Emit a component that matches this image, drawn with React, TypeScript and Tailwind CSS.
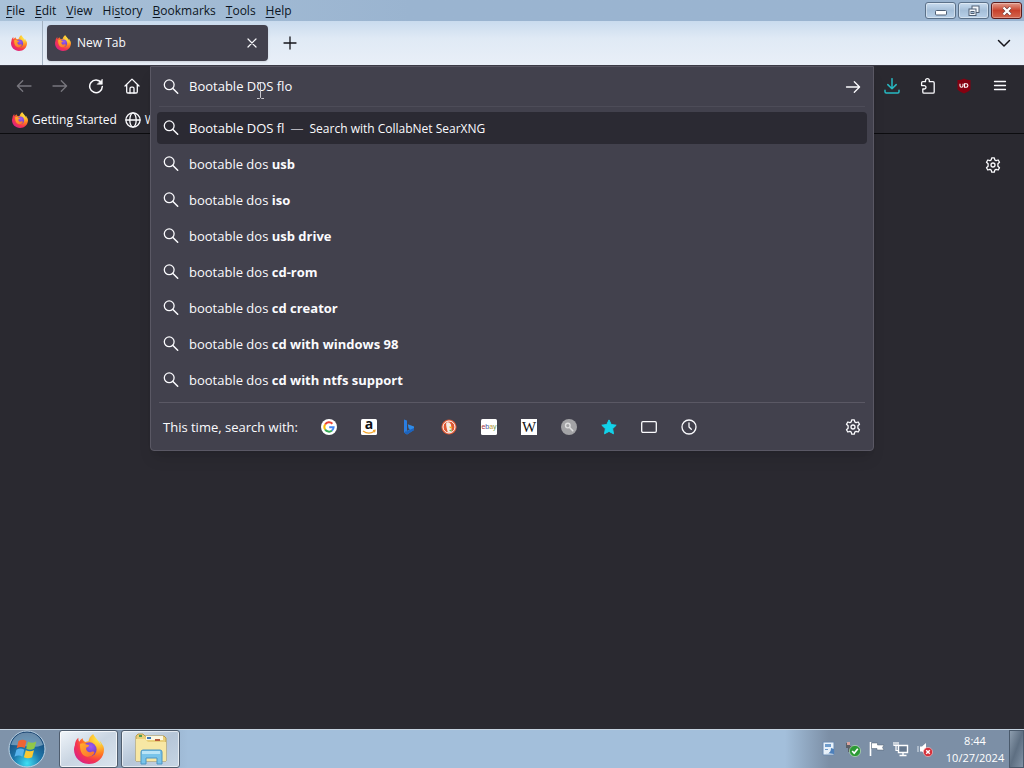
import { useState, type ReactNode } from 'react';

function FirefoxLogo({ className }: { className: string }) {
  return (
    <svg viewBox="0 0 32 32" className={className} aria-hidden="true">
      <defs>
        <radialGradient id="ffBody" cx="0.82" cy="0.15" r="1">
          <stop offset="0" stopColor="#fff04a" />
          <stop offset="0.28" stopColor="#ffbd2f" />
          <stop offset="0.52" stopColor="#ff7a22" />
          <stop offset="0.75" stopColor="#f5364e" />
          <stop offset="1" stopColor="#d9208a" />
        </radialGradient>
        <radialGradient id="ffGlobe" cx="0.6" cy="0.3" r="0.8">
          <stop offset="0" stopColor="#a05af0" />
          <stop offset="1" stopColor="#5a35b8" />
        </radialGradient>
        <linearGradient id="ffTail" x1="0" y1="0" x2="1" y2="1">
          <stop offset="0" stopColor="#ffb02e" />
          <stop offset="1" stopColor="#ff6a2b" />
        </linearGradient>
      </defs>
      <path
        fill="url(#ffBody)"
        d="M30.3 11.5c-.7-1.700-2-3.500-3.100-4.100.9 1.700 1.300 3.300 1.500 4.500C26.900 7.400 23.800 5.600 21.300 1.600 20.900 1 20.600.5 20.500 0c-3.500 2-4.700 5.700-5 7.600-1.100.1-2.200.4-3.200.8-1.200-.6-3.300-1.800-3-4-1.700.9-3 2.400-3.600 3.900-.8-.6-1.200-2.600-1-4.200C2.600 5.400 1 8.900.9 12.200.2 13.500 0 15.500 0 16.700 0 25 7 32 16 32s16-6.700 16-15.500c0-1.700-.5-3.600-1.700-5z"
      />
      <circle cx="16.500" cy="16.500" r="7.600" fill="url(#ffGlobe)" />
      <path
        fill="url(#ffTail)"
        d="M6.500 10.500c2.200-.9 4.500-.7 6 .4 1.500.2 3 .5 3.700 1.100-.1 1.200-1.500 1.900-3 2.500-.5.900-.1 2-.1 2.400 1 2.200 3 3 5.200 2.200 2-.8 3.500-.2 3.500.9-1.300 3.300-4.600 4.800-7.800 4.300C9 23.500 6 19.500 6.500 10.500z"
      />
    </svg>
  );
}

function Line({ className = 'size-4', children }: { className?: string; children: ReactNode }) {
  return (
    <svg
      viewBox="0 0 16 16"
      className={className}
      fill="none"
      stroke="currentColor"
      strokeWidth="1.3"
      strokeLinecap="round"
      strokeLinejoin="round"
      aria-hidden="true"
    >
      {children}
    </svg>
  );
}

const SearchIcon = () => (
  <Line className="size-4 shrink-0">
    <circle cx="6.200" cy="5.800" r="4.900" />
    <path d="M9.900 9.500l4.800 4.800" strokeWidth="1.500" />
  </Line>
);

const GearIcon = () => (
  <Line>
    <path d="M6.700.8h2.600l.5 2.100 1.300.8 2.100-.7 1.300 2.300-1.600 1.500v2.400l1.600 1.500-1.300 2.300-2.100-.7-1.300.8-.5 2.100H6.700l-.5-2.100-1.300-.8-2.100.7-1.300-2.300 1.600-1.500V6.800L1.500 5.300 2.800 3l2.100.7 1.300-.8z" />
    <circle cx="8" cy="8" r="2" />
  </Line>
);

const GlobeIcon = () => (
  <Line>
    <circle cx="8" cy="8" r="7.100" />
    <ellipse cx="8" cy="8" rx="3.200" ry="7.100" />
    <path d="M1 8h14" />
  </Line>
);

const menus = [
  ['', 'F', 'ile'],
  ['', 'E', 'dit'],
  ['', 'V', 'iew'],
  ['Hi', 's', 'tory'],
  ['', 'B', 'ookmarks'],
  ['', 'T', 'ools'],
  ['', 'H', 'elp'],
];

const suggestions = ['usb', 'iso', 'usb drive', 'cd-rom', 'cd creator', 'cd with windows 98', 'cd with ntfs support'];

const engines: { name: string; icon: ReactNode }[] = [
  {
    name: 'Google',
    icon: (
      <svg viewBox="0 0 16 16" className="size-4">
        <circle cx="8" cy="8" r="8" fill="#fff" />
        <g fill="none" strokeWidth="2">
          <path d="M4.100 5.500A4.600 4.600 0 0 1 11.400 4.800" stroke="#ea4335" />
          <path d="M4.100 5.500a4.600 4.600 0 0 0 0 5" stroke="#fbbc05" />
          <path d="M4.100 10.500a4.600 4.600 0 0 0 6.900 1" stroke="#34a853" />
          <path d="M11 11.500A4.600 4.600 0 0 0 12.600 8.200H8.200" stroke="#4285f4" />
        </g>
      </svg>
    ),
  },
  {
    name: 'Amazon',
    icon: (
      <svg viewBox="0 0 16 16" className="size-4 overflow-visible">
        <rect width="16" height="16" rx="1.500" fill="#fff" />
        <text x="8" y="10" textAnchor="middle" fontSize="14" fontWeight="700" fontFamily="Open Sans, sans-serif" fill="#111">a</text>
        <path d="M2 12c3.500 2.600 8 2.600 11.500.3M12 11.500l2-.2-.5 2" fill="none" stroke="#f3a52c" strokeWidth="1.200" />
      </svg>
    ),
  },
  {
    name: 'Bing',
    icon: (
      <svg viewBox="0 0 16 16" className="size-4">
        <path d="M3 .5l3 1v10.200L3 13.500z" fill="#2a7de0" />
        <path d="M6.800 5.300l6.200 2.300v3.200L6 15.500l-3-2 6-3.200-1.400-.8z" fill="#2f8be8" />
        <path d="M3 13.500l3 2 7-4.200V9z" fill="#1d63bd" />
      </svg>
    ),
  },
  {
    name: 'DuckDuckGo',
    icon: (
      <svg viewBox="0 0 16 16" className="size-4">
        <circle cx="8" cy="8" r="7.600" fill="#de5833" />
        <circle cx="8" cy="8" r="6" fill="none" stroke="#fff" strokeWidth="1" />
        <path d="M5.200 3.700c2.800-1.300 5.200.6 5 3.900l.6 5.200c-1.500 1-3 .9-4 .4C6.100 10 4.800 7.200 5.200 3.700z" fill="#f6eee6" />
        <path d="M8.200 7.600l3.400.5-2.500 1.300z" fill="#fdb80a" />
        <path d="M8.500 11l2.100-.4v2l-2.100-.6z" fill="#5eb648" />
      </svg>
    ),
  },
  {
    name: 'eBay',
    icon: (
      <svg viewBox="0 0 16 16" className="size-4">
        <rect width="16" height="16" rx="1.500" fill="#fff" />
        <text x="8" y="10" textAnchor="middle" fontSize="7" fontFamily="Liberation Sans, sans-serif">
          <tspan fill="#a83238">e</tspan>
          <tspan fill="#3c54a0">b</tspan>
          <tspan fill="#c29a35">a</tspan>
          <tspan fill="#6b9440">y</tspan>
        </text>
      </svg>
    ),
  },
  {
    name: 'Wikipedia',
    icon: (
      <svg viewBox="0 0 16 16" className="size-4">
        <rect width="16" height="16" fill="#fff" />
        <text x="8" y="13" textAnchor="middle" fontSize="15" fontFamily="Liberation Serif, serif" fill="#111">W</text>
      </svg>
    ),
  },
  {
    name: 'CollabNet SearXNG',
    icon: (
      <svg viewBox="0 0 16 16" className="size-4">
        <circle cx="8" cy="8" r="8" fill="#a3a3a6" />
        <circle cx="6.800" cy="6.600" r="2.300" fill="none" stroke="#dededf" strokeWidth="1.400" />
        <path d="M8.600 8.500l3.200 3.300" stroke="#dededf" strokeWidth="1.600" strokeLinecap="round" />
      </svg>
    ),
  },
  {
    name: 'Bookmarks',
    icon: (
      <svg viewBox="0 0 16 16" className="size-4">
        <path
          d="M8 .9l2.200 4.600 5 .7-3.600 3.500.9 5.100L8 12.400l-4.500 2.400.9-5.100L.8 6.200l5-.7z"
          fill="#12d3ea"
          stroke="#12d3ea"
          strokeLinejoin="round"
        />
      </svg>
    ),
  },
  {
    name: 'Tabs',
    icon: (
      <Line>
        <rect x=".7" y="2.700" width="14.600" height="10.600" rx="1.200" />
      </Line>
    ),
  },
  {
    name: 'History',
    icon: (
      <Line>
        <circle cx="8" cy="8" r="7" />
        <path d="M8 4v4l2.300 2.300" />
      </Line>
    ),
  },
];

function ToolButton({ label, dim, children }: { label: string; dim?: boolean; children: ReactNode }) {
  return (
    <button aria-label={label} className={`flex h-10 w-9 shrink-0 items-center justify-center ${dim ? 'text-[#77767d]' : 'text-[#fbfbfe]'}`}>
      {children}
    </button>
  );
}

function WindowControls() {
  return (
    <div className="flex gap-0.5 self-start pt-0.5 pr-0.5">
      <button aria-label="Minimize" className="flex h-[17px] w-[31px] items-center justify-center rounded-[3px] border border-[#5b7189] bg-linear-to-b from-[#c9dcef] via-[#a5bfd9] to-[#b8d0e8] inset-ring inset-ring-white/40">
        <svg viewBox="0 0 12 6" className="mt-1 h-1.5 w-3">
          <rect x=".5" y=".5" width="11" height="4.500" rx="1" fill="#fff" stroke="#4f5f74" />
        </svg>
      </button>
      <button aria-label="Restore" className="flex h-[17px] w-[31px] items-center justify-center rounded-[3px] border border-[#5b7189] bg-linear-to-b from-[#c9dcef] via-[#a5bfd9] to-[#b8d0e8] inset-ring inset-ring-white/40">
        <svg viewBox="0 0 12 12" className="size-3" fill="#f4f8fc" stroke="#4f5f74">
          <rect x="4" y="1" width="7" height="6.500" />
          <rect x="1" y="4" width="7" height="6.500" />
          <rect x="3" y="6.500" width="3" height="2" fill="#9db7d2" />
        </svg>
      </button>
      <button aria-label="Close" className="flex h-[17px] w-[31px] items-center justify-center rounded-[3px] border border-[#5c1c1c] bg-linear-to-b from-[#e09a8c] via-[#c8412c] to-[#d4664e] inset-ring inset-ring-white/30">
        <svg viewBox="0 0 12 10" className="h-2.5 w-3">
          <path d="M2.500 1.500l7 7M9.500 1.500l-7 7" stroke="#6b3a3a" strokeWidth="3.600" />
          <path d="M2.500 1.500l7 7M9.500 1.500l-7 7" stroke="#fff" strokeWidth="2.400" />
        </svg>
      </button>
    </div>
  );
}

function UrlPanel() {
  const [query, setQuery] = useState('Bootable DOS flo');
  return (
    <div className="absolute inset-x-0 top-0 z-10 rounded-b border border-[#5a5864] bg-[#42414d] text-[13px] text-[#fbfbfe] shadow-lg">
      <form className="mx-2 flex h-10 items-center border-b border-[#4d4c58] px-1">
        <SearchIcon />
        <input
          aria-label="Search or enter address"
          value={query}
          onChange={(e) => setQuery(e.target.value)}
          className="ml-2.5 min-w-0 flex-1 bg-transparent outline-none"
        />
        <button type="button" aria-label="Go">
          <Line>
            <path d="M1.500 8h13M9.300 2.700L14.600 8l-5.300 5.300" />
          </Line>
        </button>
      </form>
      <ul className="flex flex-col gap-1 px-1.5 pt-[5px] pb-1.5">
        <li>
          <button className="flex h-8 w-full items-center rounded bg-[#2b2a33] px-1.5 text-left">
            <SearchIcon />
            <span className="ml-2.5 pt-0.5">Bootable DOS fl</span>
            <span className="mx-1.5 pt-0.5 text-[#b5b4bb]">—</span>
            <span className="pt-0.5 text-xs">Search with CollabNet SearXNG</span>
          </button>
        </li>
        {suggestions.map((s) => (
          <li key={s}>
            <button className="flex h-8 w-full items-center rounded px-1.5 text-left">
              <SearchIcon />
              <span className="ml-2.5 pt-0.5">
                bootable dos <b>{s}</b>
              </span>
            </button>
          </li>
        ))}
      </ul>
      <div className="mx-2 flex h-12 items-center border-t border-[#5a5864] px-1">
        <span className="w-[146px] pt-0.5">This time, search with:</span>
        <div className="flex flex-1">
          {engines.map((e) => (
            <button key={e.name} aria-label={e.name} className="flex h-8 w-10 items-center justify-center">
              {e.icon}
            </button>
          ))}
        </div>
        <button aria-label="Search settings">
          <GearIcon />
        </button>
      </div>
      <svg viewBox="0 0 9 19" className="pointer-events-none absolute top-[14px] left-[105px] h-[19px] w-[9px]" aria-hidden="true">
        <path d="M1 1.500h2.500l1 1 1-1H8M4.500 2.500v14M1 17.500h2.500l1-1 1 1H8" fill="none" stroke="#c9c8ce" />
      </svg>
    </div>
  );
}

function Taskbar() {
  return (
    <footer className="flex h-[39px] shrink-0 items-stretch border-t border-[#c5d3e0] bg-[#a3bfdb]">
      <div className="flex bg-linear-to-r from-[#7f93aa] from-60% to-[#a3bfdb] pr-2">
        <button aria-label="Start" className="flex w-[59px] items-center justify-center pr-1.5">
          <svg viewBox="0 0 38 38" className="size-[38px]">
            <defs>
              <radialGradient id="orb" cx=".5" cy=".9" r=".85">
                <stop offset="0" stopColor="#3fe0f4" />
                <stop offset=".45" stopColor="#1d78ac" />
                <stop offset="1" stopColor="#16406e" />
              </radialGradient>
            </defs>
            <circle cx="19" cy="19" r="18" fill="url(#orb)" stroke="#bcd3e4" />
            <path d="M3 15C5 7 11 2.500 19 2.500S33 7 35 15c-9 4-22 0-32 0z" fill="#b9d2e2" opacity=".5" />
            <path d="M10.500 11c3-1.700 5.400-1.500 8 .1l-1.800 7c-2.600-1.500-5-1.600-8 .1z" fill="#ee6434" />
            <path d="M20 11.800c2.800 1.400 5.500 1.300 8.300-.2l-1.900 7c-2.900 1.500-5.500 1.600-8.200.1z" fill="#91c748" />
            <path d="M8.400 19.700c3-1.600 5.300-1.500 7.900 0l-1.900 7c-2.600-1.500-5-1.500-7.900.1z" fill="#57b3ec" />
            <path d="M17.800 20.300c2.800 1.400 5.400 1.400 8.200 0l-1.900 6.900c-2.800 1.500-5.500 1.500-8.200.1z" fill="#fbc932" />
          </svg>
        </button>
        <button aria-label="Firefox" className="mr-[3px] flex w-[59px] items-center justify-center rounded-[3px] border border-[#4f5d6e] bg-linear-to-br from-[#f0f5fa] via-[#c9d5e2] to-[#dae4ee] inset-ring inset-ring-white/70">
          <FirefoxLogo className="size-[30px]" />
        </button>
        <button aria-label="Windows Explorer" className="flex w-[59px] items-center justify-center rounded-[3px] border border-[#4f5d6e] bg-linear-to-br from-[#dde6ef] via-[#b6c6d8] to-[#c6d5e4] inset-ring inset-ring-white/60">
          <svg viewBox="0 0 34 32" className="h-8 w-[34px]">
            <path d="M2 3l2-2h5l2 2h19l2 2v23H2z" fill="#e9cf7a" stroke="#b99d4d" />
            <path d="M12 3h17v4H12z" fill="#fbf7e2" />
            <path d="M5 2h3v2H5z" fill="#4c9c52" />
            <path d="M13 4h4v2h-4z" fill="#3a77b8" />
            <path d="M21 6h5v2h-5z" fill="#b85b3a" />
            <path d="M2 6h9l3 3h18v19H2z" fill="#f7e7a4" />
            <path d="M7 19q0-2 2-2h17q2 0 2 2v12h-5v-6H12v6H7z" fill="#79c4ea" stroke="#4d95c4" />
            <path d="M8 18h18v3H8z" fill="#b9e4f7" />
          </svg>
        </button>
      </div>
      <div className="ml-auto flex items-center gap-2 bg-linear-to-r from-[#a3bfdb] to-[#7c8fa6] to-20% pl-9">
        <svg viewBox="0 0 16 16" className="size-4">
          <path d="M2 1h11v13H2z" fill="#e8f1fa" stroke="#6d8bb0" />
          <path d="M4 3h6v3H4zM4 8h3v1H4z" fill="#6f9ccc" />
          <path d="M5 12c3 1 5-1 5-5l3 1v5z" fill="#4d80bb" />
        </svg>
        <svg viewBox="0 0 16 16" className="size-4">
          <path d="M1 2h4v3h3v6H3V7H1z" fill="#5a5f66" />
          <path d="M2 1h3v3H2z" fill="#d8a4a0" />
          <circle cx="10" cy="10" r="5.600" fill="#2c9a35" stroke="#c9e8c9" strokeWidth=".6" />
          <path d="M7.200 10l2 2.200 3.600-4.400" fill="none" stroke="#fff" strokeWidth="1.700" />
        </svg>
        <svg viewBox="0 0 16 16" className="size-4">
          <path d="M1.500 1v14" stroke="#fff" strokeWidth="1.600" />
          <path d="M2.500 2h6v2h6.500L13.500 6.500 15 9H8V7.500H2.500z" fill="#fff" stroke="#4f5d6e" strokeWidth=".5" />
        </svg>
        <svg viewBox="0 0 16 16" className="size-4" fill="none" stroke="#fff">
          <path d="M5.500 4.500h9v7h-9z" fill="#66788e" strokeWidth="1.400" />
          <path d="M10 12v2M6.500 14.500h7" strokeWidth="1.400" />
          <path d="M1 1v3.500h4V1M3 1v8.500h2" strokeWidth="1.200" />
        </svg>
        <svg viewBox="0 0 16 16" className="size-4">
          <path d="M3 5.500h2L9 2v12L5 10.500H3z" fill="#fff" />
          <path d="M1 5v6" stroke="#dce5ee" />
          <circle cx="11" cy="11" r="4.600" fill="#d5303a" stroke="#f4c8cb" strokeWidth=".6" />
          <path d="M9.200 9.200l3.600 3.600M12.800 9.200l-3.600 3.600" stroke="#fff" strokeWidth="1.400" />
        </svg>
        <time className="ml-1 w-[60px] text-center text-[11px] leading-[17px] text-white">
          8:44
          <br />
          10/27/2024
        </time>
      </div>
      <div className="flex bg-[#7c8fa6] pl-1">
        <button aria-label="Show desktop" className="w-[15px] border border-[#4a5a6c] bg-linear-to-br from-[#8d9dae] via-[#5e6f82] to-[#8293a6]" />
      </div>
    </footer>
  );
}

export default function App() {
  return (
    <div className="flex min-h-screen flex-col bg-[#2a2930] font-['Open_Sans','Noto_Sans',sans-serif] text-xs text-[#fbfbfe]">
      <header>
        <div className="flex h-[21px] items-center bg-linear-to-r from-[#a9c1d8] to-[#9ab4d0] to-40%">
          <nav className="flex flex-1 gap-2.5 pl-1.5 text-[#0c1522]">
            {menus.map(([pre, key, post]) => (
              <button key={key + post}>
                {pre}
                <u className="underline-offset-2">{key}</u>
                {post}
              </button>
            ))}
          </nav>
          <WindowControls />
        </div>
        <div className="flex h-11 items-center bg-linear-to-b from-[#c9dbee] via-[#e0eaf5] via-40% to-[#e9eff8]">
          <button aria-label="Pinned tab" className="flex h-full w-[43px] items-center justify-center border-r border-[#a3b1c0] pr-1">
            <FirefoxLogo className="size-4" />
          </button>
          <div className="ml-1 flex h-9 w-[221px] items-center rounded bg-[#42414d] px-2 shadow-sm">
            <FirefoxLogo className="size-4" />
            <span className="ml-1.5 flex-1">New Tab</span>
            <button aria-label="Close tab">
              <Line>
                <path d="M4 4l8 8M12 4l-8 8" strokeWidth="1.200" />
              </Line>
            </button>
          </div>
          <button aria-label="New tab" className="ml-3.5 text-[#15141a]">
            <Line>
              <path d="M8 2v12M2 8h12" />
            </Line>
          </button>
          <button aria-label="List all tabs" className="mr-3 ml-auto text-[#15141a]">
            <Line>
              <path d="M2.500 5.500L8 11l5.500-5.500" strokeWidth="1.500" />
            </Line>
          </button>
        </div>
      </header>

      <div className="border-y border-t-[#3b3a45] border-b-[#0c0c0f]">
        <div className="flex px-1.5">
          <ToolButton label="Back" dim>
            <Line>
              <path d="M15 8H1.500M6.700 2.700L1.400 8l5.300 5.300" />
            </Line>
          </ToolButton>
          <ToolButton label="Forward" dim>
            <Line>
              <path d="M1 8h13.500M9.300 2.700L14.600 8l-5.300 5.300" />
            </Line>
          </ToolButton>
          <ToolButton label="Reload">
            <Line>
              <path d="M13.200 4.800A6.300 6.300 0 1 0 14.300 8.500" strokeWidth="1.500" />
              <path d="M14.300 1.500v4.800H9.500z" fill="currentColor" strokeWidth=".6" />
            </Line>
          </ToolButton>
          <ToolButton label="Home">
            <Line>
              <path d="M1 8l7-6.900L15 8M2.700 6.500v7.300q0 1.200 1.200 1.200h8.200q1.200 0 1.200-1.200V6.500" />
              <path d="M6 15v-4.500q0-1.300 1.300-1.300h1.400q1.300 0 1.300 1.300V15" />
            </Line>
          </ToolButton>
          <div className="relative min-w-0 flex-1">
            <UrlPanel />
          </div>
          <ToolButton label="Downloads">
            <Line className="size-4 text-[#27b9c2]">
              <path d="M8 .7v10M3.800 6.600L8 10.800l4.200-4.200M1 12.300v1.500q0 1.200 1.200 1.200h11.600q1.200 0 1.200-1.200v-1.500" strokeWidth="1.500" />
            </Line>
          </ToolButton>
          <ToolButton label="Extensions">
            <Line>
              <path d="M5.500 3.700V2.600a1.900 1.900 0 0 1 3.800 0v1.100h3.700q1.200 0 1.200 1.200v9.100q0 1.200-1.200 1.200H4q-1.200 0-1.200-1.200v-3h1.500a1.700 1.700 0 0 0 0-3.400H1.600V4.900q0-1.200 1.200-1.200z" />
            </Line>
          </ToolButton>
          <ToolButton label="uBlock Origin">
            <svg viewBox="0 0 16 16" className="size-4">
              <path d="M8 .5C6 2 4 2 1.500 2v9.500C3.500 14 6 14.500 8 15.500c2-1 4.500-1.500 6.500-4V2C12 2 10 2 8 .5z" fill="#850010" />
              <path d="M4 5.800v2q0 1.500 1.500 1.500T7 7.800v-2" fill="none" stroke="#fff" strokeWidth="1.100" />
              <path d="M8.500 5.800h1.700q1.700 0 1.700 1.700t-1.700 1.700H8.500z" fill="none" stroke="#fff" strokeWidth="1.100" />
            </svg>
          </ToolButton>
          <ToolButton label="Open application menu">
            <Line>
              <path d="M2.500 3.500h11M2.500 7.500h11M2.500 11.500h11" />
            </Line>
          </ToolButton>
        </div>
        <div className="flex h-[27px] items-center gap-2 pl-3">
          <a href="#getting-started" className="flex items-center gap-1">
            <FirefoxLogo className="size-4" />
            Getting Started
          </a>
          <a href="#w" className="flex items-center gap-1">
            <GlobeIcon />
            W
          </a>
        </div>
      </div>

      <main className="flex-1">
        <div className="flex justify-end pt-[23px] pr-[23px]">
          <button aria-label="Customize new tab">
            <GearIcon />
          </button>
        </div>
      </main>

      <Taskbar />
    </div>
  );
}
